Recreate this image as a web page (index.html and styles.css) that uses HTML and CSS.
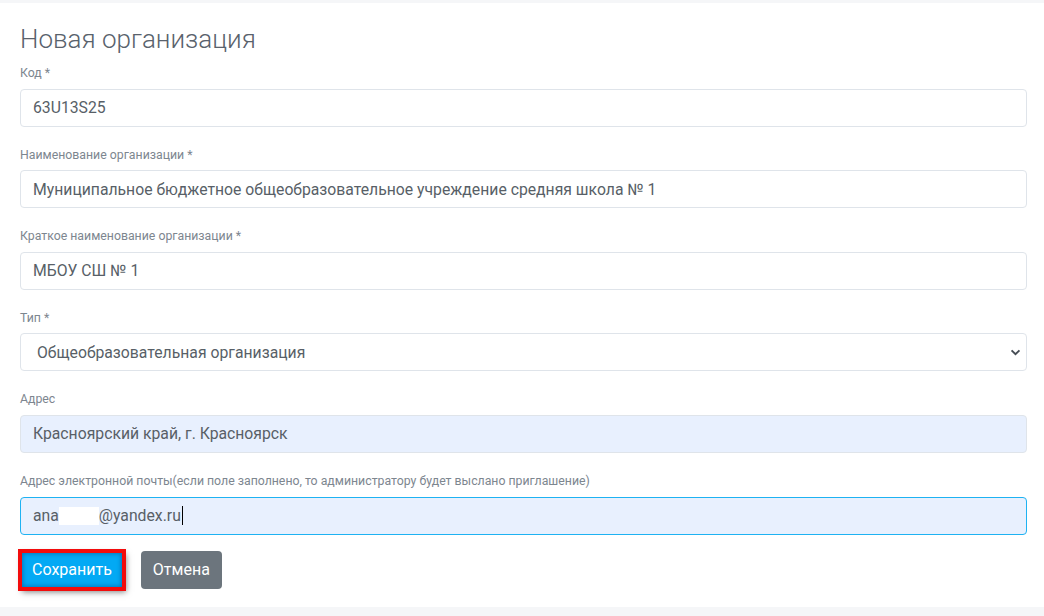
FILE: index.html
```html
<!DOCTYPE html>
<html>

<head>
    <meta charset="utf-8">
    <title>Новая организация</title>
    <link rel="stylesheet" href="styles.css">
</head>

<body>
    <div class="card">
        <h1>Новая организация</h1>

        <form class="org-form">
            <div class="form-group">
                <label for="code">Код *</label>
                <input type="text" id="code" class="form-control" value="63U13S25">
            </div>

            <div class="form-group">
                <label for="fullName">Наименование организации *</label>
                <input type="text" id="fullName" class="form-control"
                    value="Муниципальное бюджетное общеобразовательное учреждение средняя школа № 1">
            </div>

            <div class="form-group">
                <label for="shortName">Краткое наименование организации *</label>
                <input type="text" id="shortName" class="form-control" value="МБОУ СШ № 1">
            </div>

            <div class="form-group">
                <label for="type">Тип *</label>
                <select id="type" class="form-control custom-select">
                    <option>Общеобразовательная организация</option>
                </select>
            </div>

            <div class="form-group">
                <label for="address">Адрес</label>
                <input type="text" id="address" class="form-control autofilled" value="Красноярский край, г. Красноярск">
            </div>

            <div class="form-group">
                <label>Адрес электронной почты(если поле заполнено, то администратору будет выслано приглашение)</label>
                <div class="form-control autofilled focused">
                    <span>ana</span><span class="hidden-part"></span><span>@yandex.ru</span><span class="caret"></span>
                </div>
            </div>

            <div class="actions">
                <button type="button" class="btn btn-primary highlighted">Сохранить</button>
                <button type="button" class="btn btn-secondary">Отмена</button>
            </div>
        </form>
    </div>
</body>

</html>
```

FILE: styles.css
```css
body {
    margin: 0;
    font-family: Roboto, "Liberation Sans", Arial, sans-serif;
    background-color: #f5f6f8;
    overflow: hidden;
}

.card {
    margin-top: 3px;
    background-color: #ffffff;
    padding: 20px 17px 18px 20px;
    height: 566px;
}

h1 {
    margin: 0 0 6px 0;
    font-size: 26px;
    font-weight: 300;
    line-height: 32px;
    color: #59626c;
}

.form-group {
    margin-bottom: 16px;
}

label {
    display: block;
    font-size: 12.3px;
    line-height: 19.6px;
    color: #7d868f;
    padding-top: 3px;
    margin-bottom: 5px;
}

.form-control {
    display: flex;
    align-items: center;
    box-sizing: border-box;
    width: 100%;
    height: 38px;
    padding: 0 12px;
    font-family: Roboto, "Liberation Sans", Arial, sans-serif;
    font-size: 15.75px;
    color: #585f67;
    background-color: #ffffff;
    border: 1px solid #dfe4ea;
    border-radius: 4px;
    outline: none;
}

.custom-select {
    appearance: none;
    -webkit-appearance: none;
    padding-left: 16px;
    background-image: url("data:image/svg+xml,%3Csvg xmlns='http://www.w3.org/2000/svg' width='12' height='8' viewBox='0 0 12 8'%3E%3Cpath d='M1.5 1.5 6 6l4.5-4.5' fill='none' stroke='%23454c54' stroke-width='2.2'/%3E%3C/svg%3E");
    background-repeat: no-repeat;
    background-position: right 5px center;
    background-size: 11px 7px;
}

.autofilled {
    background-color: #e8f0fe;
}

.focused {
    border-color: #1eb2f2;
}

.hidden-part {
    display: inline-block;
    width: 40px;
    height: 18px;
    background-color: #ffffff;
}

.caret {
    display: inline-block;
    width: 1px;
    height: 19px;
    margin-left: 1px;
    background-color: #000000;
}

.actions {
    display: flex;
    gap: 17px;
}

.btn {
    height: 38px;
    padding: 0 12px;
    font-family: Roboto, "Liberation Sans", Arial, sans-serif;
    font-size: 16px;
    color: #ffffff;
    border: none;
    border-radius: 4px;
    cursor: pointer;
}

.btn-primary {
    background-color: #03a9f4;
}

.btn-secondary {
    background-color: #6c757d;
}

.highlighted {
    border-radius: 0;
    outline: 4px solid #f20c0c;
    outline-offset: -2px;
    box-shadow: 2px 3px 6px rgba(0, 0, 0, 0.5), inset 0 0 4px 3px rgba(0, 60, 120, 0.45);
}
```
